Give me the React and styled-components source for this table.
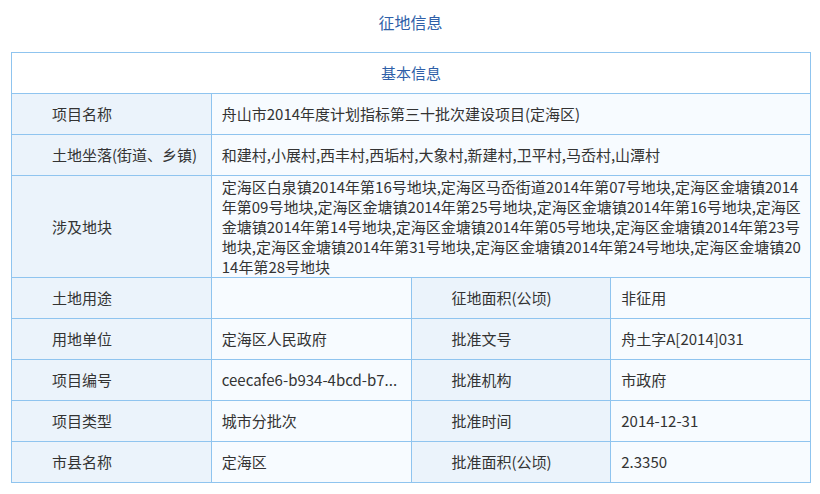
import styled, { createGlobalStyle } from "styled-components";

const GlobalStyle = createGlobalStyle`
  body {
    margin: 0;
    background: #ffffff;
    font-family: "Noto Sans CJK SC", "Noto Sans", sans-serif;
  }
`;

const Page = styled.div`
  padding: 0 10px 0 11px;
`;

const Title = styled.h1`
  margin: 0;
  height: 52px;
  line-height: 44px;
  text-align: center;
  font-size: 16px;
  font-weight: normal;
  color: #2f5fa8;
`;

const Table = styled.table`
  width: 800px;
  border-collapse: collapse;
  table-layout: fixed;
  font-size: 15px;
  color: #333333;
`;

const HeaderCell = styled.th`
  height: 40px;
  padding: 0;
  border: 1px solid #8fc4ef;
  background: #ffffff;
  color: #2f5fa8;
  font-weight: normal;
  font-size: 15px;
  line-height: 20px;
`;

const Label = styled.td`
  height: 40px;
  border: 1px solid #8fc4ef;
  background: #ebf3fb;
  padding: 0 0 0 40px;
  line-height: 20px;
  white-space: nowrap;
`;

const Value = styled.td`
  height: 40px;
  border: 1px solid #8fc4ef;
  background: #f7fbff;
  padding: ${(p) => (p.$multi ? "1px 4px 0 10px" : "0 8px 0 10px")};
  line-height: 20px;
  word-break: break-all;
  white-space: ${(p) => (p.$multi ? "normal" : "nowrap")};
  overflow: hidden;
`;

const fullRows = [
  ["项目名称", "舟山市2014年度计划指标第三十批次建设项目(定海区)"],
  ["土地坐落(街道、乡镇)", "和建村,小展村,西丰村,西垢村,大象村,新建村,卫平村,马岙村,山潭村"],
  [
    "涉及地块",
    "定海区白泉镇2014年第16号地块,定海区马岙街道2014年第07号地块,定海区金塘镇2014年第09号地块,定海区金塘镇2014年第25号地块,定海区金塘镇2014年第16号地块,定海区金塘镇2014年第14号地块,定海区金塘镇2014年第05号地块,定海区金塘镇2014年第23号地块,定海区金塘镇2014年第31号地块,定海区金塘镇2014年第24号地块,定海区金塘镇2014年第28号地块",
    true,
  ],
];

const pairRows = [
  ["土地用途", "", "征地面积(公顷)", "非征用"],
  ["用地单位", "定海区人民政府", "批准文号", "舟土字A[2014]031"],
  ["项目编号", "ceecafe6-b934-4bcd-b7...", "批准机构", "市政府"],
  ["项目类型", "城市分批次", "批准时间", "2014-12-31"],
  ["市县名称", "定海区", "批准面积(公顷)", "2.3350"],
];

export default function App() {
  return (
    <Page>
      <GlobalStyle />
      <Title>征地信息</Title>
      <Table>
        <colgroup>
          <col style={{ width: "25%" }} />
          <col style={{ width: "25%" }} />
          <col style={{ width: "25%" }} />
          <col style={{ width: "25%" }} />
        </colgroup>
        <thead>
          <tr>
            <HeaderCell colSpan={4}>基本信息</HeaderCell>
          </tr>
        </thead>
        <tbody>
          {fullRows.map(([label, value, multi]) => (
            <tr key={label}>
              <Label>{label}</Label>
              <Value colSpan={3} $multi={multi}>
                {value}
              </Value>
            </tr>
          ))}
          {pairRows.map(([l1, v1, l2, v2]) => (
            <tr key={l1}>
              <Label>{l1}</Label>
              <Value>{v1}</Value>
              <Label>{l2}</Label>
              <Value>{v2}</Value>
            </tr>
          ))}
        </tbody>
      </Table>
    </Page>
  );
}
